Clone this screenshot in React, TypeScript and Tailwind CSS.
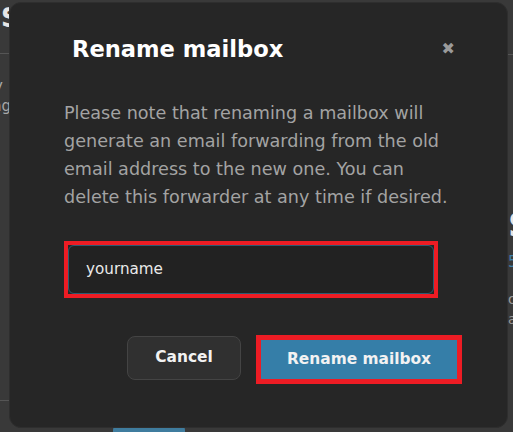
import React from "react";

export default function App() {
  return (
    <div className="relative w-[513px] h-[432px] overflow-hidden bg-[#393939] font-['DejaVu_Sans',sans-serif]">
      {/* Page behind the modal */}
      <div className="flex h-full justify-between">
        <div className="w-[9px] overflow-hidden">
          <div className="pt-[3px] pl-[1px] text-[26px] font-bold leading-[30px] text-[#e6e6e6]">S</div>
          <div className="mt-[20px] h-px w-[40px] bg-[#555]" />
          <div className="mt-[22px] text-[15px] leading-[20px] text-[#a8a8a8] whitespace-nowrap">
            <div className="-ml-[6px]">y</div>
            <div className="-ml-[8px]">ng</div>
          </div>
          <div className="mt-[284px] h-px w-[40px] bg-[#555]" />
        </div>
        <div className="flex-1 pl-[104px] pt-[424px]">
          <div className="h-[20px] w-[72px] rounded-md bg-[#3f7c9e]" />
        </div>
        <div className="w-[5px] overflow-hidden">
          <div className="mt-[54px] h-px w-[40px] bg-[#555]" />
          <div className="mt-[144px] text-[34px] font-bold leading-[52px] text-[#e6e6e6] whitespace-nowrap">S</div>
          <div className="text-[15px] leading-[22px] text-[#3f7fa8] whitespace-nowrap">5</div>
          <div className="mt-[16px] text-[14px] leading-[20px] text-[#9a9a9a] whitespace-nowrap">o</div>
          <div className="text-[14px] leading-[20px] text-[#9a9a9a] whitespace-nowrap">a</div>
        </div>
      </div>

      {/* Modal */}
      <div className="absolute left-[9px] top-[2px] flex h-[426px] w-[499px] flex-col rounded-[12px] border border-[#2e2e2e] bg-[#262626]">
        <div className="flex items-center justify-between pl-[62px] pr-[52px] pt-[30px]">
          <h2 className="text-[22.6px] font-bold leading-[32px] text-white">Rename mailbox</h2>
          <span className="text-[16px] font-bold leading-none text-[#9a9a9a]">✖</span>
        </div>
        <p className="mt-[34px] px-[54px] text-[17.6px] leading-[28px] text-[#a3a3a3] whitespace-nowrap">
          Please note that renaming a mailbox will
          <br />
          generate an email forwarding from the old
          <br />
          email address to the new one. You can
          <br />
          delete this forwarder at any time if desired.
        </p>
        <div className="mt-[30px] ml-[54px] w-[374px] border-4 border-[#ed1c24]">
          <div className="flex h-[49px] items-center rounded-[6px] border border-[#2b5b73] bg-[#222] px-[17px]">
            <span className="text-[15.2px] text-[#eaeaea]">yourname</span>
          </div>
        </div>
        <div className="mt-[37px] flex justify-end gap-[15px] pr-[45px]">
          <button className="mt-[1px] h-[44px] w-[114px] rounded-[8px] border border-[#444] bg-[#303030] text-[15.4px] font-bold text-[#f2f2f2]">
            Cancel
          </button>
          <div className="border-[5px] border-[#ed1c24]">
            <button className="h-[39px] w-[196px] bg-[#357ea8] text-[15.4px] font-bold text-[#f2f2f2]">
              Rename mailbox
            </button>
          </div>
        </div>
      </div>
    </div>
  );
}
